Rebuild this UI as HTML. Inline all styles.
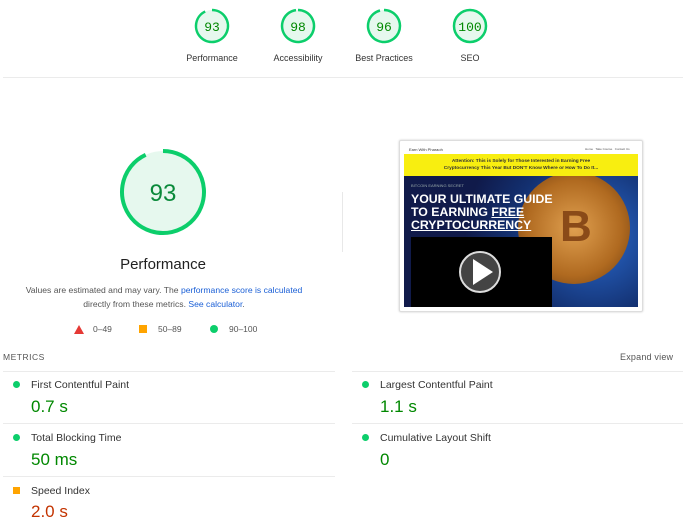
<!DOCTYPE html>
<html><head><meta charset="utf-8"><style>
body{margin:0;width:683px;height:521px;background:#fff;font-family:"Liberation Sans",sans-serif;position:relative;overflow:hidden;color:#212121}
.a{position:absolute}
.lbl{font-size:9px;color:#333;text-align:center;width:90px}
.mt{font-size:10.5px;color:#333}
.mv{font-size:17px;color:#080}
.dot{width:7px;height:7px;border-radius:50%;background:#0cce6b}
.ln{height:1px;background:#ebebeb}
</style></head><body>
<svg class="a" style="left:0;top:0" width="683" height="80">
<g fill="#e6f8ee"><circle cx="212" cy="26" r="16"/><circle cx="298" cy="26" r="16"/><circle cx="384" cy="26" r="16"/><circle cx="470" cy="26" r="16"/></g>
<g fill="none" stroke="#0cce6b" stroke-width="2.5">
<path d="M212 10 A16 16 0 1 1 205.19 11.52"/>
<path d="M298 10 A16 16 0 1 1 296 10.13"/>
<path d="M384 10 A16 16 0 1 1 380.02 10.5"/>
<circle cx="470" cy="26" r="16"/>
</g>
<g font-family="Liberation Mono,monospace" font-size="13" fill="#080" text-anchor="middle">
<text x="212" y="31">93</text><text x="298" y="31">98</text><text x="384" y="31">96</text><text x="470" y="31">100</text></g>
</svg>
<div class="a lbl" style="left:167px;top:53px">Performance</div>
<div class="a lbl" style="left:253px;top:53px">Accessibility</div>
<div class="a lbl" style="left:339px;top:53px">Best Practices</div>
<div class="a lbl" style="left:425px;top:53px">SEO</div>
<div class="a ln" style="left:3px;top:77px;width:680px"></div>

<svg class="a" style="left:110px;top:140px" width="110" height="110">
<circle cx="53" cy="52" r="41" fill="#e6f8ee"/>
<path d="M53 11 A41 41 0 1 1 35.67 14.84" fill="none" stroke="#0cce6b" stroke-width="4"/>
<text x="53" y="61" text-anchor="middle" font-size="24" fill="#0a8a3a" font-family="Liberation Sans">93</text>
</svg>
<div class="a" style="left:63px;top:256px;width:200px;text-align:center;font-size:15px;color:#212121">Performance</div>
<div class="a" style="left:12px;top:283px;width:304px;text-align:center;font-size:8.6px;line-height:14px;color:#555">Values are estimated and may vary. The <span style="color:#1a5fd6">performance score is calculated</span><br>directly from these metrics. <span style="color:#1a5fd6">See calculator</span>.</div>
<svg class="a" style="left:74px;top:325px" width="10" height="9"><polygon points="5,0 10,9 0,9" fill="#e53935"/></svg>
<div class="a" style="left:93px;top:324px;font-size:8.5px;color:#555">0–49</div>
<div class="a" style="left:139px;top:325px;width:8px;height:8px;background:#ffa400"></div>
<div class="a" style="left:158px;top:324px;font-size:8.5px;color:#555">50–89</div>
<div class="a dot" style="left:210px;top:325px;width:8px;height:8px"></div>
<div class="a" style="left:229px;top:324px;font-size:8.5px;color:#555">90–100</div>
<div class="a" style="left:342px;top:192px;width:1px;height:60px;background:#e8e8e8"></div>

<div class="a" style="left:399px;top:140px;width:242px;height:170px;border:1px solid #ddd;border-radius:2px;background:#fff;box-shadow:0 0 2px #ccc">
<div class="a" style="left:9px;top:6px;font-size:4px;color:#333">Earn With Pharaoh</div>
<div class="a" style="left:185px;top:6px;font-size:3px;color:#555">Home &nbsp; Take Course &nbsp; Contact Us</div>
<div class="a" style="left:4px;top:13px;width:234px;height:22px;background:#f8ee10;font-size:4.8px;font-weight:bold;text-align:center;line-height:7px;padding-top:4px;box-sizing:border-box;color:#333">Attention: This is Solely for Those Interested in Earning Free<br>Cryptocurrency This Year But DON'T Know Where or How To Do It...</div>
<div class="a" style="left:4px;top:35px;width:234px;height:131px;background:#101a4a;overflow:hidden">
<div class="a" style="left:60px;top:-70px;width:260px;height:260px;border-radius:50%;background:radial-gradient(circle,#2a6bd0 0%,#133070 45%,#101a4a 70%)"></div>
<div class="a" style="left:114px;top:-4px;width:112px;height:112px;border-radius:50%;background:radial-gradient(circle,#e0a050,#b06a20 60%,#6a3a10)"></div>
<div class="a" style="left:156px;top:26px;font-size:44px;font-weight:bold;color:#8a4a18;font-family:'Liberation Sans'">B</div>
<div class="a" style="left:7px;top:7px;font-size:4px;color:#9aa">BITCOIN EARNING SECRET</div>
<div class="a" style="left:7px;top:17px;font-size:12.3px;font-weight:bold;color:#fff;line-height:13px">YOUR ULTIMATE GUIDE<br>TO EARNING <u>FREE</u><br><u>CRYPTOCURRENCY</u></div>
<div class="a" style="left:7px;top:61px;width:141px;height:70px;background:#000">
<div class="a" style="left:48px;top:14px;width:42px;height:42px;border-radius:50%;border:2px solid #ddd;box-sizing:border-box;background:#444"></div>
<svg class="a" style="left:60px;top:22px" width="22" height="26"><polygon points="2,0 22,13 2,26" fill="#fff"/></svg>
</div></div></div>

<div class="a" style="left:3px;top:352px;font-size:8.5px;color:#555;letter-spacing:.5px">METRICS</div>
<div class="a" style="left:620px;top:352px;font-size:9px;color:#555;letter-spacing:.2px">Expand view</div>
<div class="a ln" style="left:3px;top:371px;width:332px"></div>
<div class="a ln" style="left:352px;top:371px;width:331px"></div>
<div class="a ln" style="left:3px;top:423px;width:332px"></div>
<div class="a ln" style="left:352px;top:423px;width:331px"></div>
<div class="a ln" style="left:3px;top:476px;width:332px"></div>

<div class="a dot" style="left:13px;top:381px"></div><div class="a mt" style="left:31px;top:379px">First Contentful Paint</div><div class="a mv" style="left:31px;top:397px">0.7 s</div>
<div class="a dot" style="left:362px;top:381px"></div><div class="a mt" style="left:380px;top:379px">Largest Contentful Paint</div><div class="a mv" style="left:380px;top:397px">1.1 s</div>
<div class="a dot" style="left:13px;top:434px"></div><div class="a mt" style="left:31px;top:432px">Total Blocking Time</div><div class="a mv" style="left:31px;top:450px">50 ms</div>
<div class="a dot" style="left:362px;top:434px"></div><div class="a mt" style="left:380px;top:432px">Cumulative Layout Shift</div><div class="a mv" style="left:380px;top:450px">0</div>
<div class="a" style="left:13px;top:487px;width:7px;height:7px;background:#ffa400"></div><div class="a mt" style="left:31px;top:485px">Speed Index</div><div class="a mv" style="left:31px;top:502px;color:#c33300">2.0 s</div>
</body></html>
